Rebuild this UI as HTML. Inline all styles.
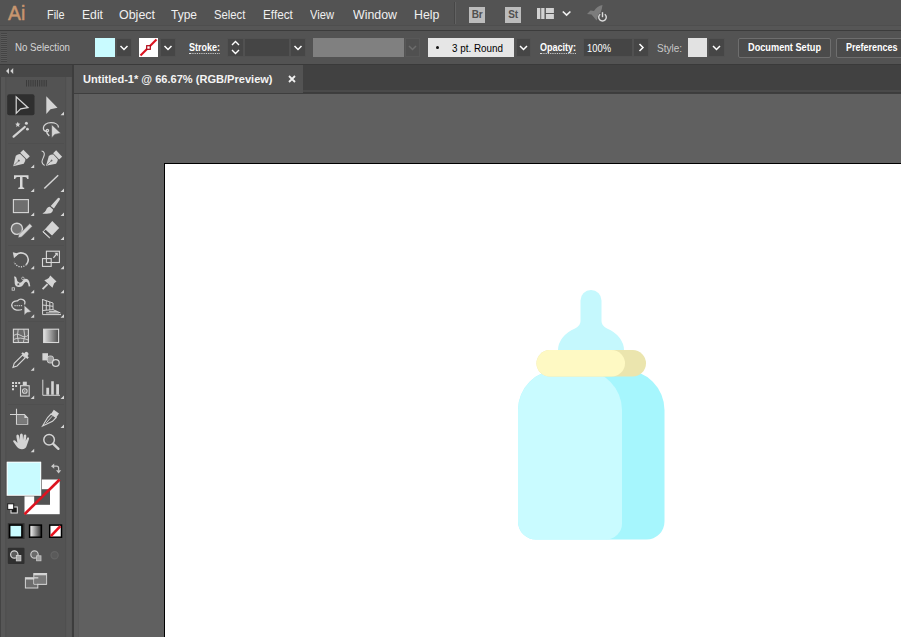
<!DOCTYPE html>
<html><head><meta charset="utf-8"><title>Illustrator</title>
<style>
*{box-sizing:border-box;margin:0;padding:0}
html,body{width:901px;height:637px;overflow:hidden;background:#606060;font-family:"Liberation Sans",sans-serif;}
#app{position:relative;width:901px;height:637px;overflow:hidden;background:#606060}
.abs{position:absolute}
#menubar{left:0;top:0;width:901px;height:30px;background:#535353}
#menubar .mi{position:absolute;top:8px;font-size:12px;line-height:14px;color:#f0f0f0;white-space:nowrap;transform-origin:0 50%}
#menuline{left:0;top:30px;width:901px;height:1px;background:#3c3c3c}
#ctrl{left:0;top:31px;width:901px;height:33px;background:#535353}
#ctrlline{left:0;top:64px;width:901px;height:1px;background:#3a3a3a}
.ct{position:absolute;font-size:10px;line-height:12px;white-space:nowrap;transform-origin:0 50%;color:#fff}
.dd{position:absolute;top:38px;height:19px;background:#464646;border:1px solid #515151}
#tabbar{left:74px;top:65px;width:827px;height:28px;background:linear-gradient(to bottom,#414141 0,#414141 24.500px,#4a4a4a 25px,#4a4a4a 27px,#3c3c3c 27.500px)}
#tab{left:74px;top:65px;width:229px;height:28px;background:#535353}
#tabline{left:74px;top:93px;width:827px;height:1px;background:#3e3e3e}
#canvas{left:75px;top:94px;width:826px;height:543px;background:#606060}
#artboard{left:164px;top:163px;width:740px;height:480px;background:#fff;border-left:1px solid #000;border-top:1px solid #000}
#tools{left:0;top:65px;width:72px;height:572px;background:#535353}
#gap{left:71.500px;top:65px;width:2.500px;height:572px;background:#3d3d3d}
#docl{left:74px;top:94px;width:4.500px;height:543px;background:#5c5c5c;border-right:1px solid #595959}

.dd svg{display:block}
.ul{border-bottom:1px dotted #ddd;line-height:11px}
.btn{position:absolute;top:38px;height:20px;background:#4b4b4b;border:1px solid #6e6e6e;border-radius:2px}
.sq{width:16px;height:16px;background:#bcbcbc;color:#505050;font-size:10px;font-weight:bold;line-height:16px;text-align:center;letter-spacing:-0.300px}
</style><style id="fit">
#t1{transform:scaleX(0.905)}
#t2{transform:scaleX(1.015)}
#t3{transform:scaleX(1.038)}
#t4{transform:scaleX(0.999)}
#t5{transform:scaleX(0.938)}
#t6{transform:scaleX(0.978)}
#t7{transform:scaleX(0.930)}
#t8{transform:scaleX(1.031)}
#t9{transform:scaleX(1.029)}
#t10{transform:scaleX(0.924)}
#t11{transform:scaleX(0.900)}
#t12{transform:scaleX(0.939)}
#t13{transform:scaleX(0.900)}
#t14{transform:scaleX(0.894)}
#t15{transform:scaleX(0.952)}
#t16{transform:scaleX(0.919)}
#t17{transform:scaleX(0.899)}
#t18{transform:scaleX(1.005)}
</style>
</head><body>
<div id="app">
 <div id="canvas" class="abs"></div>
 <div id="artboard" class="abs"></div>
 <svg id="bottle" class="abs" style="left:500px;top:280px" width="180" height="270" viewBox="500 280 180 270">
  <path d="M580.500 300.500a10.500 10.500 0 0 1 21 0V321q0 5 5.500 7.500A33 25 0 0 1 624 350H558A33 25 0 0 1 575 328.500q5.500-2.500 5.500-7.500z" fill="#c5f8fd"/>
  <path d="M558 370H624.500a40 40 0 0 1 40 40V521.500a18 18 0 0 1-18 18H536a18 18 0 0 1-18-18V410a40 40 0 0 1 40-40z" fill="#a6f6fd"/>
  <path d="M558 370H582a40 40 0 0 1 40 40V523.500a16 16 0 0 1-16 16H536a18 18 0 0 1-18-18V410a40 40 0 0 1 40-40z" fill="#c9fbff"/>
  <rect x="536.500" y="350" width="109.500" height="26.500" rx="13.250" fill="#ebe5ae"/>
  <rect x="536.500" y="350" width="88.500" height="26.500" rx="13.250" fill="#fef9c3"/>
 </svg>
 <div id="menubar" class="abs">
  <span class="abs" id="ailogo" style="left:8.200px;top:1px;font-size:21px;line-height:24px;color:#c8966f;-webkit-text-stroke:0.500px #c8966f;transform-origin:0 50%;transform:scaleX(0.920)">Ai</span>
  <div class="abs" style="left:0;top:25px;width:901px;height:1px;background:#4e4e4e"></div>
  <div class="abs" style="left:0;top:26px;width:901px;height:4px;background:#565656"></div>
  <div class="abs" style="left:454px;top:2px;width:1px;height:22px;background:#474747"></div>
  <div class="abs" style="left:455px;top:2px;width:1px;height:22px;background:#626262"></div>
  <div class="abs sq" style="left:469px;top:7px">Br</div>
  <div class="abs sq" style="left:505px;top:7px">St</div>
  <svg class="abs" style="left:536px;top:4px" width="76" height="22" viewBox="536 4 76 22">
   <path d="M537 8h3.300v11h-3.300zM541.200 8h3.300v11h-3.300zM545.900 8h8v5h-8zM545.900 14h8v5h-8z" fill="#d2d2d2"/>
   <path d="M562.800 11.500l3.800 3.600 3.800-3.600" fill="none" stroke="#f0f0f0" stroke-width="1.700"/>
   <path d="M602.500 5Q597 6 594 11L590.500 10.500L587 14L591.500 14.500L594.500 18L596.500 20.500L598 17Q601.500 12.500 602.500 5z" fill="#7c7c7c"/>
   <circle cx="602.500" cy="17.200" r="4.800" fill="#535353"/>
   <path d="M600.200 14.200A3.800 3.800 0 1 0 604.800 14.200" fill="none" stroke="#dcdcdc" stroke-width="1.400"/>
   <path d="M602.500 12.200V17.200" stroke="#dcdcdc" stroke-width="1.400"/>
  </svg>
  <span id="t1" class="mi" style="left:47px">File</span>
  <span id="t2" class="mi" style="left:82px">Edit</span>
  <span id="t3" class="mi" style="left:119px">Object</span>
  <span id="t4" class="mi" style="left:171px">Type</span>
  <span id="t5" class="mi" style="left:214px">Select</span>
  <span id="t6" class="mi" style="left:263px">Effect</span>
  <span id="t7" class="mi" style="left:310px">View</span>
  <span id="t8" class="mi" style="left:353px">Window</span>
  <span id="t9" class="mi" style="left:414px">Help</span>
 </div>
 <div id="menuline" class="abs"></div>

 <div id="ctrl" class="abs">
  <div class="abs" style="left:1px;top:2px;width:6px;height:29px;background:repeating-linear-gradient(to bottom,#444 0 1px,#5a5a5a 1px 2px)"></div>
 </div>
 <span id="t10" class="ct" style="left:15px;top:41px;color:#d6d6d6;font-size:10.5px">No Selection</span>
 <div class="abs" style="left:95px;top:38px;width:19.500px;height:19px;background:#c9fbff"></div>
 <div class="dd" style="left:116px;width:16px"><svg class="chev" width="14" height="17" viewBox="0 0 14 17"><path d="M3.5 7l3.5 3.5 3.5-3.5" fill="none" stroke="#fff" stroke-width="1.5"/></svg></div>
 <svg class="abs" style="left:139px;top:38px" width="19" height="19" viewBox="0 0 19 19"><rect width="19" height="19" fill="#fff"/><path d="M1.500 17.500L17.500 1.500" stroke="#dc1420" stroke-width="2.200"/><rect x="7.700" y="7.700" width="3.600" height="3.600" fill="#fff" stroke="#b00010" stroke-width="1.200"/></svg>
 <div class="dd" style="left:160px;width:16px"><svg class="chev" width="14" height="17" viewBox="0 0 14 17"><path d="M3.5 7l3.5 3.5 3.5-3.5" fill="none" stroke="#fff" stroke-width="1.5"/></svg></div>
 <span id="t11" class="ct ul" style="left:189px;top:42px;font-weight:bold">Stroke:</span>
 <div class="dd" style="left:227px;width:17px"><svg width="15" height="17" viewBox="0 0 15 17"><path d="M4 6l3.5-3.5L11 6M4 11l3.5 3.500L11 11" fill="none" stroke="#fff" stroke-width="1.4"/></svg></div>
 <div class="dd" style="left:244px;width:46px;background:#454545"></div>
 <div class="dd" style="left:290px;width:16px"><svg class="chev" width="14" height="17" viewBox="0 0 14 17"><path d="M3.500 7l3.500 3.500 3.500-3.500" fill="none" stroke="#fff" stroke-width="1.500"/></svg></div>
 <div class="abs" style="left:313px;top:38px;width:91px;height:19px;background:#808080"></div>
 <div class="dd" style="left:405px;width:15px;background:#505050;border-color:#585858"><svg class="chev" width="13" height="17" viewBox="0 0 13 17"><path d="M3 7l3.500 3.500L10 7" fill="none" stroke="#6c6c6c" stroke-width="1.500"/></svg></div>
 <div class="abs" style="left:428px;top:38px;width:86px;height:19px;background:#e6e6e6"></div>
 <div class="abs" style="left:436px;top:46px;width:3px;height:3px;border-radius:50%;background:#111"></div>
 <span id="t12" class="ct" style="left:452px;top:42px;color:#000;font-size:10.5px">3 pt. Round</span>
 <div class="dd" style="left:516px;width:15px"><svg class="chev" width="13" height="17" viewBox="0 0 13 17"><path d="M3 7l3.500 3.500L10 7" fill="none" stroke="#fff" stroke-width="1.500"/></svg></div>
 <span id="t13" class="ct ul" style="left:540px;top:42px;font-weight:bold">Opacity:</span>
 <div class="dd" style="left:583px;width:50px;background:#454545"></div>
 <span id="t14" class="ct" style="left:587px;top:42px;font-size:10.5px">100%</span>
 <div class="dd" style="left:633px;width:16px"><svg width="14" height="17" viewBox="0 0 14 17"><path d="M5.500 5l3.500 3.500-3.500 3.500" fill="none" stroke="#fff" stroke-width="1.500"/></svg></div>
 <span id="t15" class="ct" style="left:657px;top:42px;color:#c8c8c8;font-size:10.5px">Style:</span>
 <div class="abs" style="left:688px;top:38px;width:19px;height:19px;background:#e2e2e2"></div>
 <div class="dd" style="left:708px;width:17px"><svg class="chev" width="15" height="17" viewBox="0 0 15 17"><path d="M4 7l3.500 3.500L11 7" fill="none" stroke="#fff" stroke-width="1.500"/></svg></div>
 <div class="btn" style="left:738px;width:93px"></div>
 <span id="t16" class="ct" style="left:748px;top:42px;font-weight:bold">Document Setup</span>
 <div class="btn" style="left:836px;width:80px"></div>
 <span id="t17" class="ct" style="left:846px;top:42px;font-weight:bold">Preferences</span>
 <div id="ctrlline" class="abs"></div>
 <div id="tabbar" class="abs"></div>
 <div id="tab" class="abs"></div>
 <span id="t18" class="ct" style="left:83px;top:73px;font-weight:bold;font-size:11px;line-height:13px;color:#f4f4f4">Untitled-1* @ 66.67% (RGB/Preview)</span>
 <svg class="abs" style="left:288px;top:74.500px" width="8" height="8" viewBox="0 0 8 8"><path d="M1 1l6 6M7 1L1 7" stroke="#f0f0f0" stroke-width="1.800"/></svg>
 <div id="tabline" class="abs"></div>
 <div id="tools" class="abs"></div>
 <svg id="toolsvg" class="abs" style="left:0;top:65px" width="72" height="572" viewBox="0 65 72 572">
  <defs>
   <linearGradient id="gr1" x1="0" x2="1" y1="0" y2="0"><stop offset="0" stop-color="#e4e4e4"/><stop offset="1" stop-color="#4a4a4a"/></linearGradient>
   <linearGradient id="gr2" x1="0" x2="1" y1="0" y2="0"><stop offset="0" stop-color="#ffffff"/><stop offset="1" stop-color="#2a2a2a"/></linearGradient>
  </defs>
  <!-- edges -->
  <rect x="0" y="65" width="1" height="572" fill="#444"/><rect x="1" y="77" width="4.500" height="560" fill="#575757"/><rect x="5.500" y="77" width="0.800" height="560" fill="#4d4d4d"/>
  <rect x="65.500" y="77" width="0.800" height="560" fill="#4d4d4d"/><rect x="66.300" y="77" width="5.200" height="560" fill="#575757"/>
  <!-- header -->
  <rect x="0" y="65" width="72" height="12" fill="#474747"/>
  <path d="M9 68L6 71L9 74zM13.200 68L10.200 71L13.200 74z" fill="#d0d0d0"/>
  <path d="M26.500 80v6.500M28.700 80v6.500M30.900 80v6.500M33.100 80v6.500M35.300 80v6.500M37.500 80v6.500M39.700 80v6.500M41.900 80v6.500M44.100 80v6.500M46.300 80v6.500" stroke="#3b3b3b" stroke-width="1"/>
  <!-- separators -->
  <path d="M8 143.500H64M8 245.500H64M8 321.500H64M8 404.500H64" stroke="#4f4f4f" stroke-width="1"/>
  <!-- row1: selection -->
  <rect x="7.200" y="94.300" width="27.300" height="21" rx="2" fill="#2f2f2f"/>
  <path d="M16.200 96.800V113.400L20.600 108.900L28 107.700z" fill="none" stroke="#d8d8d8" stroke-width="1.200" stroke-linejoin="miter"/>
  <path d="M46.300 96.200V114L50.500 109.300L57.500 107.800z" fill="#d4d4d4"/>
  <path d="M64 111.8V115.3H60.5z" fill="#d6d6d6"/>
  <!-- row2: wand, lasso -->
  <path d="M13.600 136.700L24.800 127" stroke="#d4d4d4" stroke-width="2.200" stroke-linecap="round"/>
  <path d="M17.800 121.800l0.800 1.700 1.800 0.300-1.400 1.200 0.400 1.900-1.600-1-1.600 1 0.400-1.900-1.400-1.200 1.800-0.300z" fill="#d4d4d4"/>
  <circle cx="26.400" cy="123.200" r="1.500" fill="#d4d4d4"/><circle cx="27.400" cy="129.200" r="1.400" fill="#d4d4d4"/>
  <path d="M58.500 127.500C58.500 124.500 55 122.700 51 122.700C46.500 122.700 43.400 125 43.400 128C43.400 130 44.800 131.300 46.800 131.600C48.300 131.800 49 130.600 48.200 129.700C47.300 128.900 46 129.800 46.300 131C46.700 133 47.600 134.500 49.300 136" fill="none" stroke="#d4d4d4" stroke-width="1.300"/>
  <path d="M51.600 124.500V138L54.800 134.400L60.800 133.200z" fill="#d4d4d4" stroke="#535353" stroke-width="0.600"/>
  <!-- row3: pen, curvature -->
  <g transform="translate(13.200 166.300) rotate(-45)"><path d="M0 0L9.300-5.600Q12.400-5.300 13.800-3.400V3.400Q12.400 5.300 9.300 5.600z" fill="#d4d4d4"/><rect x="14.600" y="-4.600" width="4.300" height="9.200" fill="#d4d4d4"/><path d="M1.500 0H7.500" stroke="#6a6a6a" stroke-width="0.700"/><circle cx="8" cy="0" r="1" fill="#666"/></g>
  <path d="M34.2 164.6V168.1H30.7z" fill="#d6d6d6"/>
  <g transform="translate(46 165.800) rotate(-43) scale(0.950)"><path d="M0 0L9.300-5.600Q12.400-5.300 13.800-3.400V3.400Q12.400 5.300 9.300 5.600z" fill="#d4d4d4"/><rect x="14.600" y="-4.600" width="4.300" height="9.200" fill="#d4d4d4"/><path d="M1.500 0H7.500" stroke="#6a6a6a" stroke-width="0.700"/><circle cx="8" cy="0" r="1" fill="#666"/></g>
  <path d="M41.600 151C44.500 151.500 45 154 43.600 157C42 160.500 40.500 163 44.600 165.500" fill="none" stroke="#d4d4d4" stroke-width="1.100"/>
  <!-- row4: type, line -->
  <path d="M14 175.200H28.500V179H27.300Q27 177 25 177H22.500V186.500Q22.500 187.800 24.200 187.800V189H18.300V187.800Q20 187.800 20 186.500V177H17.500Q15.500 177 15.200 179H14z" fill="#d8d8d8"/>
  <path d="M34.2 188.4V191.9H30.7z" fill="#d6d6d6"/>
  <path d="M44.300 188.500L58.200 175.300" stroke="#d4d4d4" stroke-width="1.500"/>
  <path d="M64 188.4V191.9H60.5z" fill="#d6d6d6"/>
  <!-- row5: rect, brush -->
  <rect x="13.400" y="199.600" width="15" height="13" fill="#6e6e6e" stroke="#d8d8d8" stroke-width="1.100"/>
  <path d="M34.2 212.4V215.9H30.7z" fill="#d6d6d6"/>
  <path d="M59.500 198Q60.400 198.800 59.600 200L53.900 208.600L50.700 206L57.500 198.400Q58.500 197.300 59.500 198z" fill="#d4d4d4"/>
  <path d="M49.900 206.800L53 209.400Q53 213 48.500 213.500Q45 213.900 42.400 213.500Q45.300 212.300 46 210.200Q47 207 49.900 206.800z" fill="#d4d4d4"/>
  <path d="M64 212.4V215.9H60.5z" fill="#d6d6d6"/>
  <!-- row6: shaper, eraser -->
  <circle cx="16.900" cy="228.800" r="5.600" fill="#747474" stroke="#d4d4d4" stroke-width="1.400"/>
  <path d="M29.800 223.600L32.400 226.200L21.600 237L18 237.800L18.900 234.500z" fill="#d4d4d4" stroke="#535353" stroke-width="0.500"/>
  <path d="M34.2 236.4V239.9H30.7z" fill="#d6d6d6"/>
  <path d="M52.300 221L59.200 228L49.600 238L42.700 231.800z" fill="#d4d4d4"/>
  <path d="M45.600 229.700L52.200 235.800L50.300 237.600L43.800 231.500z" fill="#4a4a4a"/>
  <path d="M42.700 231.800L49.600 238" stroke="#d4d4d4" stroke-width="1"/>
  <path d="M64 236.4V239.9H60.5z" fill="#d6d6d6"/>
  <!-- row7: rotate, scale -->
  <path d="M15.500 255.500A7.300 7.300 0 0 1 28.300 259.500A7.300 7.300 0 0 1 26.300 264.600" fill="none" stroke="#d4d4d4" stroke-width="1.600"/>
  <path d="M26.300 264.600A7.300 7.300 0 0 1 14.200 262" fill="none" stroke="#d4d4d4" stroke-width="1.300" stroke-dasharray="1.200 1.200"/>
  <path d="M12.800 252.200L18.800 253.800L14 258.300z" fill="#d4d4d4"/>
  <path d="M34.2 265.8V269.3H30.7z" fill="#d6d6d6"/>
  <rect x="46.400" y="251.200" width="13" height="11.300" fill="none" stroke="#d8d8d8" stroke-width="1.100"/>
  <rect x="42.500" y="258.600" width="8.700" height="7.800" fill="none" stroke="#d8d8d8" stroke-width="1.100"/>
  <path d="M53.400 257.800L56.500 254.200" stroke="#d8d8d8" stroke-width="1.300"/><path d="M54.500 252.800H57.800V256.200z" fill="#d8d8d8"/>
  <path d="M64 265.8V269.3H60.5z" fill="#d6d6d6"/>
  <!-- row8: width, puppet pin -->
  <path d="M14 276.600Q16.300 276 16.600 278.500Q16.800 281.500 19 282.600Q21 283.300 22.500 281Q24.300 278 27 279Q29.600 280 30.300 286.300L28.700 286.500Q28 282 26.300 281.700Q25 281.600 24 283.500Q22 287.500 18.300 287Q14.500 286.500 14.600 281.500Q14.700 278.500 14 276.600z" fill="#d4d4d4"/>
  <circle cx="18.300" cy="284.200" r="1.300" fill="#535353" stroke="#d4d4d4" stroke-width="0.700"/>
  <circle cx="22.900" cy="278.400" r="1.300" fill="#535353" stroke="#d4d4d4" stroke-width="0.700"/>
  <rect x="12.100" y="287.800" width="2.400" height="2.400" fill="#535353" stroke="#d4d4d4" stroke-width="0.800"/>
  <path d="M34.2 289.8V293.3H30.7z" fill="#d6d6d6"/>
  <path d="M50.300 275.600L56.500 281.500L54.200 283.200Q53.200 285.500 52.500 287.700L44.300 280.300Q47 279.500 48.800 278z" fill="#d4d4d4"/>
  <path d="M47.600 284.200L42.600 289.200" stroke="#d4d4d4" stroke-width="1.800"/>
  <path d="M64 289.8V293.3H60.5z" fill="#d6d6d6"/>
  <!-- row9: shape builder, perspective grid -->
  <path d="M24.500 304.500C26.500 299.500 20.500 297.600 17.600 300.800C13 300.500 10.600 304 12.300 307.300C14 310.400 19 310.800 22 309.500" fill="none" stroke="#d4d4d4" stroke-width="1.300"/>
  <path d="M14.500 305.600H23" stroke="#d4d4d4" stroke-width="1.200" stroke-dasharray="1.100 1"/>
  <path d="M24.200 305.300V315.300L26.800 312.700L31.400 311.800z" fill="#d4d4d4" stroke="#535353" stroke-width="0.500"/>
  <path d="M34.2 314.2V317.7H30.7z" fill="#d6d6d6"/>
  <path d="M42.600 299V314.600H61M42.600 299.500L53 303V309.600L42.600 310.500M42.600 305L53 306.300M46.300 300.700V310.200M49.800 302V309.900M53 309.600L60.500 313M49 311.400H57M46 312.900H59" fill="none" stroke="#d4d4d4" stroke-width="1"/>
  <path d="M64 314.2V317.7H60.5z" fill="#d6d6d6"/>
  <!-- row10: mesh, gradient -->
  <rect x="13.400" y="329.200" width="15" height="13.300" fill="#6a6a6a" stroke="#d8d8d8" stroke-width="1.100"/>
  <path d="M13.400 335.500Q17 332.500 21 335.500T28.400 335M18.200 329.200Q16.500 336 18.500 342.500M23.800 329.200Q26 336 23.300 342.500M13.400 339.500Q20 336.500 28.400 340" fill="none" stroke="#d4d4d4" stroke-width="0.900"/>
  <rect x="43.600" y="329.200" width="15" height="13.300" fill="url(#gr1)" stroke="#d8d8d8" stroke-width="1.100"/>
  <!-- row11: eyedropper, blend -->
  <path d="M13 367.300L14.200 363.300L22.600 355L25.300 357.700L17 366z" fill="none" stroke="#d4d4d4" stroke-width="1.100"/>
  <path d="M21.300 353.600L22.800 352.200L24.300 353.600Q25.500 351 27.500 352.300Q29.500 353.800 27.500 356L28.800 357.500L27.300 358.900z" fill="#d4d4d4"/>
  <path d="M34.2 367.2V370.7H30.7z" fill="#d6d6d6"/>
  <rect x="42.400" y="353.200" width="5.600" height="7.200" fill="#d4d4d4"/>
  <rect x="47.300" y="356" width="6.200" height="7" rx="2.300" fill="#9a9a9a" stroke="#d4d4d4" stroke-width="0.900"/>
  <circle cx="55.800" cy="363" r="3.400" fill="#535353" stroke="#d4d4d4" stroke-width="1.300"/>
  <!-- row12: symbol sprayer, graph -->
  <path d="M12 382h2v2h-2zM15.100 382h2v2h-2zM18.200 382h2v2h-2zM12 385.100h2v2h-2zM15.100 385.100h2v2h-2zM12 388.200h2v2h-2z" fill="#d4d4d4"/>
  <rect x="20.500" y="385.700" width="8.700" height="10.400" fill="#5e5e5e" stroke="#d4d4d4" stroke-width="1.100"/>
  <rect x="22.800" y="381.700" width="4" height="3.600" fill="#d4d4d4"/>
  <circle cx="24.800" cy="391" r="2.300" fill="none" stroke="#d4d4d4" stroke-width="1.100"/><circle cx="24.800" cy="391" r="0.800" fill="#d4d4d4"/>
  <path d="M34.2 395.5V399H30.7z" fill="#d6d6d6"/>
  <path d="M42.800 379.700V395.300H60" fill="none" stroke="#d4d4d4" stroke-width="1"/>
  <path d="M46.300 387.800h2.800v7h-2.800zM51.200 381.200h2.600v13.600h-2.600zM56.200 384.300h2.800v10.500h-2.800z" fill="#d4d4d4"/>
  <path d="M64 395.5V399H60.5z" fill="#d6d6d6"/>
  <!-- row13: artboard, slice -->
  <path d="M16.500 408.700V424.200H27.700V418L24.400 414.500H10" fill="none" stroke="#d4d4d4" stroke-width="1.100"/>
  <path d="M17.100 415.100H24.200L27.200 418.300V423.600H17.100z" fill="#7a7a7a"/><path d="M24.400 414.500V418H27.700z" fill="#d4d4d4"/>
  <path d="M53.800 409.800L59 413.400L56.200 417.500L51 414z" fill="#d4d4d4"/>
  <path d="M51 414L56.200 417.500L52.500 421.300L42.600 426L47.600 417.500z" fill="none" stroke="#d4d4d4" stroke-width="1.100"/>
  <path d="M52.200 416.200L46 423.200" stroke="#d4d4d4" stroke-width="0.900"/>
  <path d="M64 424.5V428H60.5z" fill="#d6d6d6"/>
  <!-- row14: hand, zoom -->
  <path d="M16.400 437Q16 434.800 17.500 434.600Q18.800 434.500 19.200 436.500L19.800 440L20 435Q20.100 433.500 21.400 433.500Q22.700 433.500 22.800 435L23 440L23.800 435.600Q24.100 434.200 25.300 434.400Q26.500 434.700 26.300 436.200L25.700 441L27 438.200Q27.700 437 28.600 437.500Q29.400 438 28.900 439.500L26.800 445.500Q25.800 449.300 22 449.300Q18.500 449.300 16.500 446.300L13.300 441.800Q12.800 440.800 13.700 440.300Q14.600 439.900 15.400 440.800L17.500 443z" fill="#d4d4d4"/>
  <path d="M34.2 448.7V452.2H30.7z" fill="#d6d6d6"/>
  <circle cx="49.100" cy="439.700" r="5.300" fill="none" stroke="#d4d4d4" stroke-width="1.500"/>
  <circle cx="49.100" cy="439.700" r="2.500" fill="none" stroke="#5e5e5e" stroke-width="0.800"/>
  <path d="M53.200 443.800L58.400 448.800" stroke="#d4d4d4" stroke-width="2.400" stroke-linecap="round"/>
  <!-- fill / stroke -->
  <rect x="24.500" y="479.500" width="35.200" height="34.700" fill="#fff"/>
  <rect x="34.200" y="489.200" width="15.800" height="15.600" fill="#535353"/>
  <path d="M24.500 514.200L59.700 479.500" stroke="#dc1420" stroke-width="2.600"/>
  <rect x="6.100" y="461.100" width="35.700" height="35.200" fill="#3c3c3c"/>
  <rect x="6.600" y="461.600" width="34.700" height="34.200" fill="#fff"/>
  <rect x="7.600" y="462.600" width="32.700" height="32.200" fill="#c9fbff"/>
  <path d="M53.500 466.200H56.500Q58.600 466.200 58.600 468.300V470.500" fill="none" stroke="#c8c8c8" stroke-width="1.300"/>
  <path d="M51 466.200L54.200 463.600V468.800zM58.600 473.500L56 470.200H61.200z" fill="#c8c8c8"/>
  <rect x="11" y="507" width="6.300" height="6" fill="#1a1a1a" stroke="#e8e8e8" stroke-width="1"/>
  <rect x="7.700" y="503.800" width="6" height="5.600" fill="#fff" stroke="#1a1a1a" stroke-width="1"/>
  <!-- color / gradient / none -->
  <rect x="7.800" y="523.200" width="16.700" height="15.700" fill="#303030"/>
  <rect x="9.700" y="525.100" width="12.200" height="12.100" fill="#c9fbff" stroke="#000" stroke-width="1.500"/>
  <rect x="29.600" y="525.100" width="11.800" height="12.100" fill="url(#gr2)" stroke="#000" stroke-width="1.500"/>
  <rect x="49.700" y="525.100" width="11.800" height="12.100" fill="#fff" stroke="#000" stroke-width="1.500"/>
  <path d="M50.800 536.200L60.400 526.200" stroke="#e8121e" stroke-width="2.600"/>
  <!-- draw modes -->
  <rect x="7.800" y="547.700" width="16.700" height="16.300" rx="1" fill="#303030"/>
  <circle cx="14.300" cy="554.500" r="3.700" fill="#5a5a5a" stroke="#d4d4d4" stroke-width="1.200"/>
  <rect x="16.300" y="555.400" width="4.600" height="5.500" fill="#a8a8a8" stroke="#d4d4d4" stroke-width="0.800"/>
  <circle cx="34.500" cy="554.500" r="3.700" fill="#6a6a6a" stroke="#c8c8c8" stroke-width="1.200"/>
  <rect x="36.600" y="555.800" width="4.400" height="5" fill="#a0a0a0" stroke="#c8c8c8" stroke-width="0.800"/>
  <circle cx="54.600" cy="555.200" r="3.600" fill="#5a5a5a" stroke="#646464" stroke-width="1.200"/>
  <!-- screen mode -->
  <rect x="33.800" y="573.500" width="12.800" height="10.700" fill="#7a7a7a" stroke="#d4d4d4" stroke-width="1"/>
  <path d="M33.800 574.500H46.600" stroke="#d4d4d4" stroke-width="1.600"/>
  <rect x="25.400" y="577.700" width="12.400" height="10.300" fill="#6c6c6c" stroke="#d4d4d4" stroke-width="1"/>
  <path d="M25.400 578.700H37.800" stroke="#d4d4d4" stroke-width="1.600"/>
  <path d="M33.800 578V584.200H46.600" stroke="#d4d4d4" stroke-width="1" fill="none"/>
  <rect x="34.300" y="578.500" width="11.800" height="5.200" fill="#7a7a7a"/>
 </svg>
 <div id="gap" class="abs"></div>
 <div id="docl" class="abs"></div>
</div>
</body></html>
